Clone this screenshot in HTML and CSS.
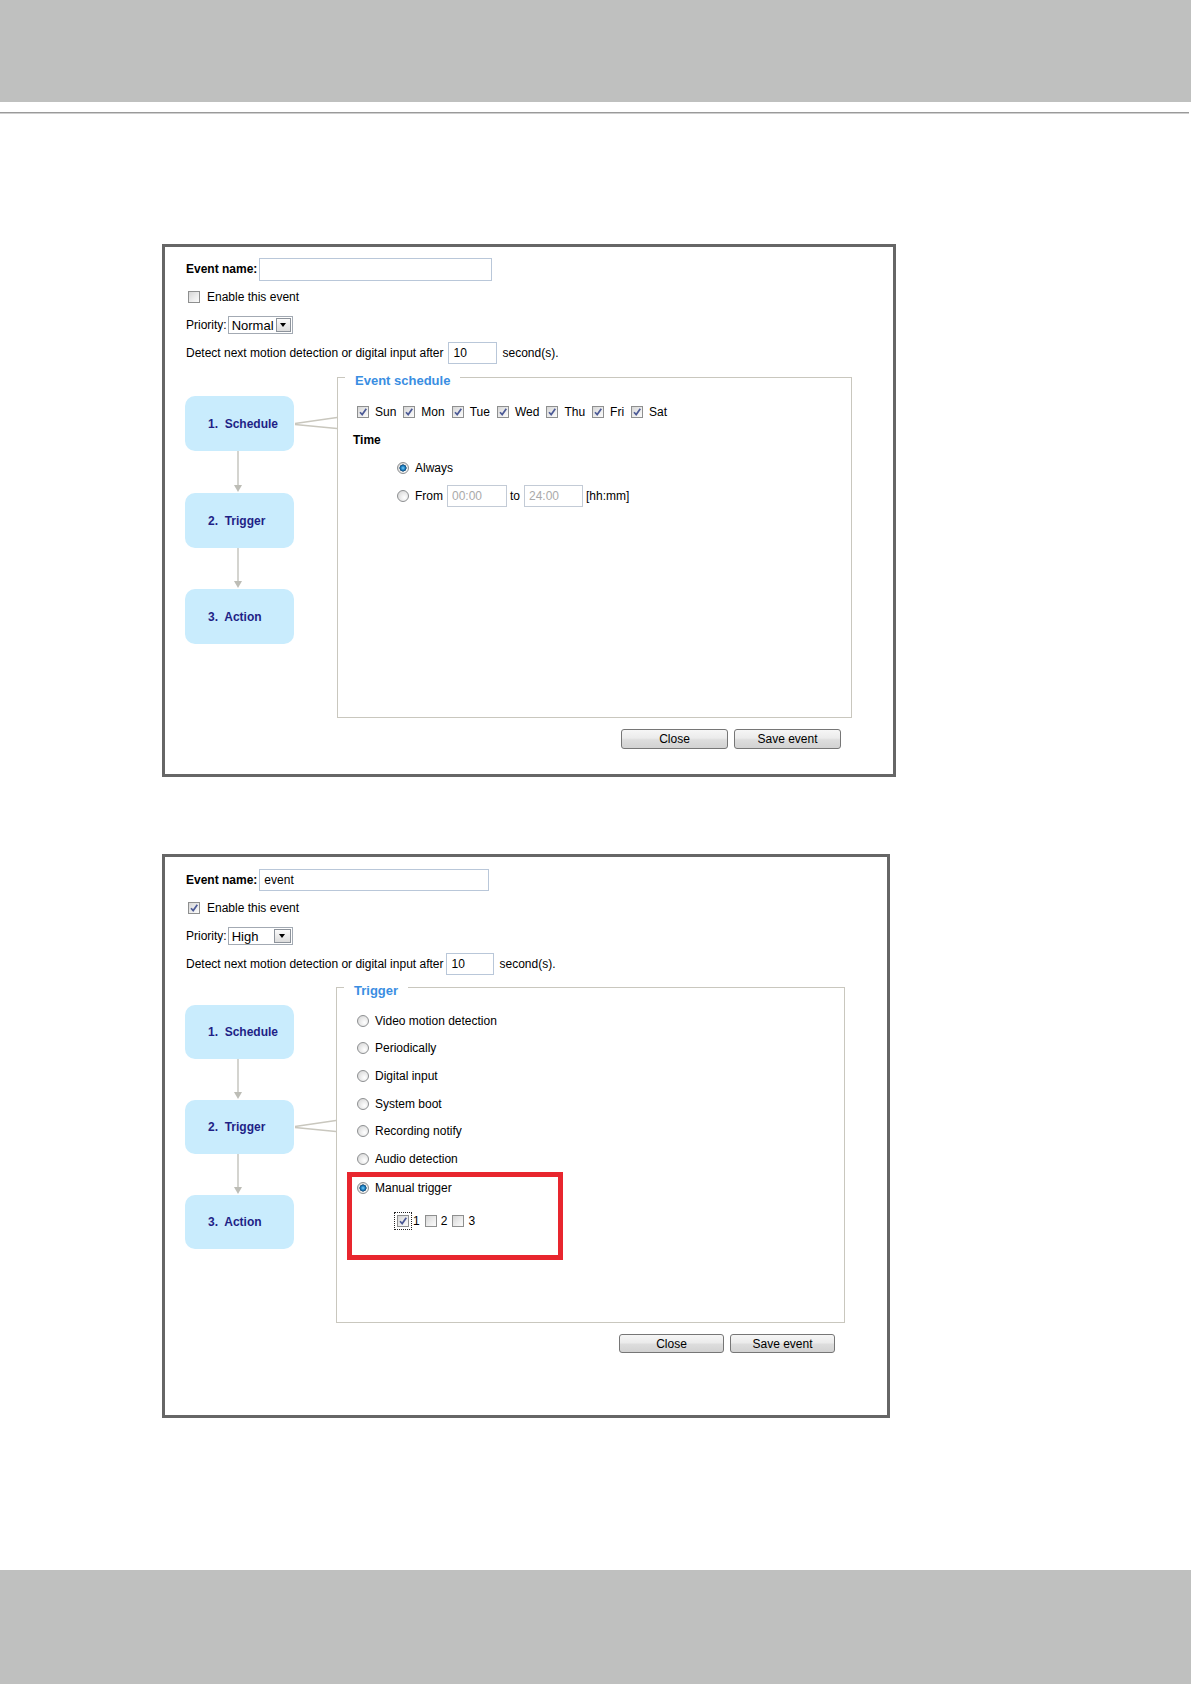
FILE: index.html
```html
<!DOCTYPE html>
<html lang="en">
<head>
    <meta charset="UTF-8">
    <meta name="viewport" content="width=device-width, initial-scale=1.0">
    <title>Event settings</title>
    <link rel="stylesheet" href="styles.css">
</head>
<body>

    <div class="top-band"></div>
    <div class="top-rule"></div>

    <main class="page">

        <section class="panel panel-schedule">
            <div class="row">
                <span class="label-strong">Event name:</span>
                <input class="text-box name-box" type="text" value="">
            </div>
            <div class="row">
                <span class="cb enable-cb"></span>
                <span class="enable-text">Enable this event</span>
            </div>
            <div class="row">
                <span>Priority:</span>
                <span class="select">
                    <span class="select-value">Normal</span>
                    <span class="select-btn"><i class="caret"></i></span>
                </span>
            </div>
            <div class="row">
                <span>Detect next motion detection or digital input after</span>
                <input class="text-box secs-box" type="text" value="10">
                <span class="secs-unit">second(s).</span>
            </div>

            <div class="event-body">
                <div class="steps">
                    <div class="step active">1.&nbsp; Schedule<svg class="wedge" width="43" height="20" viewBox="0 0 43 20"><path d="M1 9.5 L43 3.5 M1 10.5 L43 14.5" stroke="#c9c7be" stroke-width="1.4" fill="none"/></svg></div>
                    <svg class="arrow" width="10" height="42" viewBox="0 0 10 42">
                        <path d="M5 0 V35" stroke="#bdbdb6" stroke-width="1.3"/>
                        <path d="M1 34 L9 34 L5 41 Z" fill="#bdbdb6"/>
                    </svg>
                    <div class="step">2.&nbsp; Trigger</div>
                    <svg class="arrow" width="10" height="41" viewBox="0 0 10 41">
                        <path d="M5 0 V34" stroke="#bdbdb6" stroke-width="1.3"/>
                        <path d="M1 33 L9 33 L5 40 Z" fill="#bdbdb6"/>
                    </svg>
                    <div class="step">3.&nbsp; Action</div>
                </div>

                <div class="event-main">
                    <fieldset class="group">
                        <legend>Event schedule</legend>
                        <div class="group-body">
                            <div class="days">
                                <span class="day"><span class="cb"><svg viewBox="0 0 10 10"><path d="M2 5.2 L4.2 7.6 L8.3 1.8" /></svg></span>Sun</span>
                                <span class="day"><span class="cb"><svg viewBox="0 0 10 10"><path d="M2 5.2 L4.2 7.6 L8.3 1.8" /></svg></span>Mon</span>
                                <span class="day"><span class="cb"><svg viewBox="0 0 10 10"><path d="M2 5.2 L4.2 7.6 L8.3 1.8" /></svg></span>Tue</span>
                                <span class="day"><span class="cb"><svg viewBox="0 0 10 10"><path d="M2 5.2 L4.2 7.6 L8.3 1.8" /></svg></span>Wed</span>
                                <span class="day"><span class="cb"><svg viewBox="0 0 10 10"><path d="M2 5.2 L4.2 7.6 L8.3 1.8" /></svg></span>Thu</span>
                                <span class="day"><span class="cb"><svg viewBox="0 0 10 10"><path d="M2 5.2 L4.2 7.6 L8.3 1.8" /></svg></span>Fri</span>
                                <span class="day"><span class="cb"><svg viewBox="0 0 10 10"><path d="M2 5.2 L4.2 7.6 L8.3 1.8" /></svg></span>Sat</span>
                            </div>
                            <div class="time-label">Time</div>
                            <div class="radio-row">
                                <span class="radio on"></span>
                                <span class="radio-text">Always</span>
                            </div>
                            <div class="radio-row">
                                <span class="radio"></span>
                                <span class="radio-text">From</span>
                                <input class="text-box time-box" type="text" placeholder="00:00">
                                <span class="time-sep">to</span>
                                <input class="text-box time-box" type="text" placeholder="24:00">
                                <span class="time-sep">[hh:mm]</span>
                            </div>
                        </div>
                    </fieldset>
                    <div class="actions">
                        <button class="btn">Close</button>
                        <button class="btn">Save event</button>
                    </div>
                </div>
            </div>
        </section>

        <section class="panel panel-trigger">
            <div class="row">
                <span class="label-strong">Event name:</span>
                <input class="text-box name-box" type="text" value="event">
            </div>
            <div class="row">
                <span class="cb enable-cb"><svg viewBox="0 0 10 10"><path d="M2 5.2 L4.2 7.6 L8.3 1.8" /></svg></span>
                <span class="enable-text">Enable this event</span>
            </div>
            <div class="row">
                <span>Priority:</span>
                <span class="select">
                    <span class="select-value">High</span>
                    <span class="select-btn wide"><i class="caret"></i></span>
                </span>
            </div>
            <div class="row">
                <span>Detect next motion detection or digital input after</span>
                <input class="text-box secs-box" type="text" value="10">
                <span class="secs-unit">second(s).</span>
            </div>

            <div class="event-body">
                <div class="steps">
                    <div class="step">1.&nbsp; Schedule</div>
                    <svg class="arrow" width="10" height="41" viewBox="0 0 10 41">
                        <path d="M5 0 V34" stroke="#bdbdb6" stroke-width="1.3"/>
                        <path d="M1 33 L9 33 L5 40 Z" fill="#bdbdb6"/>
                    </svg>
                    <div class="step active">2.&nbsp; Trigger<svg class="wedge" width="42" height="20" viewBox="0 0 42 20"><path d="M1 9.5 L42 3.5 M1 10.5 L42 14.5" stroke="#c9c7be" stroke-width="1.4" fill="none"/></svg></div>
                    <svg class="arrow" width="10" height="41" viewBox="0 0 10 41">
                        <path d="M5 0 V34" stroke="#bdbdb6" stroke-width="1.3"/>
                        <path d="M1 33 L9 33 L5 40 Z" fill="#bdbdb6"/>
                    </svg>
                    <div class="step">3.&nbsp; Action</div>
                </div>

                <div class="event-main">
                    <fieldset class="group">
                        <legend>Trigger</legend>
                        <div class="group-body">
                            <div class="opt"><span class="radio"></span><span class="radio-text">Video motion detection</span></div>
                            <div class="opt"><span class="radio"></span><span class="radio-text">Periodically</span></div>
                            <div class="opt"><span class="radio"></span><span class="radio-text">Digital input</span></div>
                            <div class="opt"><span class="radio"></span><span class="radio-text">System boot</span></div>
                            <div class="opt"><span class="radio"></span><span class="radio-text">Recording notify</span></div>
                            <div class="opt"><span class="radio"></span><span class="radio-text">Audio detection</span></div>
                            <div class="highlight">
                                <div class="manual-row"><span class="radio on"></span><span class="radio-text">Manual trigger</span></div>
                                <div class="manual-sub">
                                    <span class="sub-item"><span class="cb focused"><svg viewBox="0 0 10 10"><path d="M2 5.2 L4.2 7.6 L8.3 1.8" /></svg></span>1</span>
                                    <span class="sub-item"><span class="cb"></span>2</span>
                                    <span class="sub-item"><span class="cb"></span>3</span>
                                </div>
                            </div>
                        </div>
                    </fieldset>
                    <div class="actions">
                        <button class="btn">Close</button>
                        <button class="btn">Save event</button>
                    </div>
                </div>
            </div>
        </section>

    </main>

    <div class="bottom-band"></div>

</body>
</html>
```

FILE: styles.css
```css
*
{
    padding: 0;
    margin: 0;
}

body
{
    min-height: 1684px;
    display: flex;
    flex-direction: column;
    background: #fff;
    color: #000;
    font-family: "Liberation Sans", Arial, Helvetica, sans-serif;
    font-size: 12px;
}

.top-band
{
    height: 102px;
    background: #bfc0bf;
}

.top-rule
{
    margin-top: 10px;
    margin-right: 2px;
    border-top: 1px solid #9a9a9a;
    border-bottom: 1px solid #cfcfcf;
}

.page
{
    padding: 130px 0 0 162px;
}

.bottom-band
{
    margin-top: auto;
    height: 114px;
    background: #bfc0bf;
}

.panel
{
    box-sizing: border-box;
    border: 3px solid #666666;
    padding-left: 20px;
}

.panel-schedule
{
    width: 734px;
    height: 533px;
    padding-top: 8px;
}

.panel-trigger
{
    width: 728px;
    height: 564px;
    margin-top: 77px;
    padding-top: 9px;
}

.row
{
    display: flex;
    align-items: center;
    height: 28px;
    padding-left: 1px;
    white-space: nowrap;
}

.label-strong
{
    font-weight: bold;
}

.text-box
{
    box-sizing: border-box;
    height: 22px;
    border: 1px solid #b9c7d9;
    padding: 0 4px;
    font-family: "Liberation Sans", Arial, sans-serif;
    font-size: 12px;
    color: #000;
    background: #fff;
    outline: none;
}

.name-box
{
    width: 233px;
    height: 23px;
    margin-left: 2px;
}

.panel-trigger .name-box
{
    width: 230px;
    height: 22px;
}

.secs-box
{
    width: 49px;
    margin-left: 5px;
}

.panel-trigger .secs-box
{
    width: 48px;
    margin-left: 3px;
}

.secs-unit
{
    margin-left: 5px;
}

.cb
{
    display: inline-flex;
    align-items: center;
    justify-content: center;
    box-sizing: border-box;
    width: 12px;
    height: 12px;
    border: 1px solid #8e8f8f;
    background: linear-gradient(135deg, #d6d6d6 0%, #eeeeee 60%, #fbfbfb 100%);
    flex-shrink: 0;
}

.cb svg
{
    width: 10px;
    height: 10px;
}

.cb svg path
{
    fill: none;
    stroke: #4c5a96;
    stroke-width: 1.7;
}

.enable-cb
{
    margin-left: 2px;
}

.enable-text
{
    margin-left: 7px;
}

.select
{
    display: inline-flex;
    align-items: center;
    justify-content: space-between;
    box-sizing: border-box;
    width: 65px;
    height: 18px;
    margin-left: 1px;
    padding-left: 3px;
    border: 1px solid #a3aab3;
}

.select-value
{
    font-size: 13px;
}

.select-btn
{
    display: flex;
    align-items: center;
    justify-content: center;
    box-sizing: border-box;
    width: 15px;
    height: 14px;
    margin-right: 1px;
    border: 1px solid #8d939b;
    background: linear-gradient(#fbfbfb, #dcdcdc);
}

.select-btn.wide
{
    width: 17px;
}

.caret
{
    width: 0;
    height: 0;
    border-left: 3.5px solid transparent;
    border-right: 3.5px solid transparent;
    border-top: 4px solid #000;
}

.event-body
{
    display: flex;
    margin-top: -1px;
}

.panel-trigger .event-body
{
    margin-top: -2px;
}

.steps
{
    display: flex;
    flex-direction: column;
    margin-top: 30px;
}

.panel-trigger .steps
{
    margin-top: 29px;
}

.step
{
    position: relative;
    box-sizing: border-box;
    width: 109px;
    height: 55px;
    padding-left: 23px;
    display: flex;
    align-items: center;
    border-radius: 10px;
    background: #c9ecfd;
    color: #1f1f86;
    font-weight: bold;
}

.panel-trigger .step
{
    height: 54px;
}

.wedge
{
    position: absolute;
    left: 100%;
    top: calc(50% - 10px);
}

.arrow
{
    display: block;
    margin-left: 48px;
}

.event-main
{
    display: flex;
    flex-direction: column;
    margin-left: 43px;
}

.panel-trigger .event-main
{
    margin-left: 42px;
}

.group
{
    box-sizing: border-box;
    width: 515px;
    height: 352px;
    min-width: 0;
    border: 1px solid #c9c7be;
}

.panel-trigger .group
{
    width: 509px;
    height: 347px;
}

.group legend
{
    margin-left: 7px;
    padding: 7px 10px 0 10px;
    font-size: 13px;
    line-height: 15px;
    font-weight: bold;
    color: #3a8ee2;
}

.group-body
{
    padding: 10px 0 0 19px;
}

.panel-trigger .group-body
{
    padding: 9px 0 0 20px;
}

.days
{
    display: flex;
    align-items: center;
    height: 28px;
}

.day
{
    display: flex;
    align-items: center;
    margin-right: 7px;
}

.day .cb
{
    margin-right: 6px;
}

.time-label
{
    display: flex;
    align-items: center;
    height: 28px;
    margin-left: -4px;
    font-weight: bold;
}

.radio-row
{
    display: flex;
    align-items: center;
    height: 28px;
    padding-left: 40px;
}

.radio
{
    box-sizing: border-box;
    width: 12px;
    height: 12px;
    border-radius: 50%;
    border: 1px solid #8d8f91;
    background: radial-gradient(circle at 65% 65%, #ffffff 0%, #e6e6e6 55%, #cfcfcf 100%);
    flex-shrink: 0;
}

.radio.on
{
    background:
        radial-gradient(circle, #7fd0f5 0, #2b8fd0 1.6px, #135f99 2.8px, #0c3f68 3.4px, transparent 3.7px),
        radial-gradient(circle at 65% 65%, #ffffff 0%, #e6e6e6 55%, #cfcfcf 100%);
}

.radio-text
{
    margin-left: 6px;
}

.time-box
{
    width: 60px;
    margin-left: 4px;
    border-color: #c3cbd6;
}

.time-box + .time-sep + .time-box
{
    width: 59px;
}

.time-box::placeholder
{
    color: #aaaaaa;
}

.time-sep
{
    margin-left: 3px;
}

.actions
{
    display: flex;
    justify-content: flex-end;
    gap: 6px;
    margin-top: 11px;
    margin-right: 11px;
}

.panel-trigger .actions
{
    margin-right: 10px;
}

.btn
{
    width: 107px;
    height: 20px;
    border: 1px solid #767676;
    border-radius: 3px;
    background: linear-gradient(#f6f6f6 0%, #ebebeb 45%, #dddddd 55%, #d2d2d2 100%);
    font-family: "Liberation Sans", Arial, sans-serif;
    font-size: 12px;
    color: #000;
    cursor: pointer;
}

.panel-trigger .btn
{
    width: 105px;
    height: 19px;
}

.opt
{
    display: flex;
    align-items: center;
    height: 27.6px;
}

.highlight
{
    box-sizing: border-box;
    width: 216px;
    margin: -1px 0 0 -10px;
    padding: 0 0 23px 5px;
    border: 5px solid #e8262e;
}

.manual-row
{
    display: flex;
    align-items: center;
    height: 22px;
}

.manual-sub
{
    display: flex;
    align-items: center;
    height: 22px;
    margin-top: 11px;
    padding-left: 40px;
}

.sub-item
{
    display: flex;
    align-items: center;
    margin-right: 5px;
}

.sub-item .cb
{
    margin-right: 4px;
}

.cb.focused
{
    outline: 1px dotted #222;
    outline-offset: 2px;
}
```
